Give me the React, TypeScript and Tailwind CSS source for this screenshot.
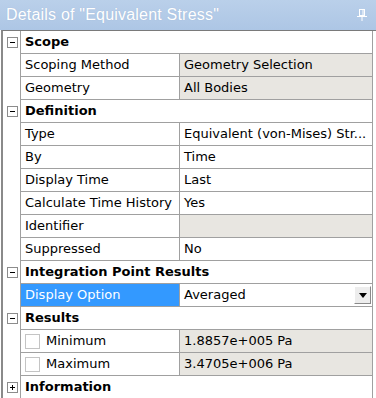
import React from "react";

type Row =
  | { kind: "header"; label: string; open: boolean }
  | { kind: "prop"; name: string; value: string; readOnly?: boolean; selected?: boolean; dropdown?: boolean; check?: boolean };

const rows: Row[] = [
  { kind: "header", label: "Scope", open: true },
  { kind: "prop", name: "Scoping Method", value: "Geometry Selection", readOnly: true },
  { kind: "prop", name: "Geometry", value: "All Bodies", readOnly: true },
  { kind: "header", label: "Definition", open: true },
  { kind: "prop", name: "Type", value: "Equivalent (von-Mises) Str..." },
  { kind: "prop", name: "By", value: "Time" },
  { kind: "prop", name: "Display Time", value: "Last" },
  { kind: "prop", name: "Calculate Time History", value: "Yes" },
  { kind: "prop", name: "Identifier", value: "", readOnly: true },
  { kind: "prop", name: "Suppressed", value: "No" },
  { kind: "header", label: "Integration Point Results", open: true },
  { kind: "prop", name: "Display Option", value: "Averaged", selected: true, dropdown: true },
  { kind: "header", label: "Results", open: true },
  { kind: "prop", name: "Minimum", value: "1.8857e+005 Pa", readOnly: true, check: true },
  { kind: "prop", name: "Maximum", value: "3.4705e+006 Pa", readOnly: true, check: true },
  { kind: "header", label: "Information", open: false },
];

function ToggleBox({ open }: { open: boolean }) {
  return (
    <div className="w-[11px] h-[11px] border border-[#8c8c8c] bg-white flex items-center justify-center relative">
      <div className="w-[5px] h-px bg-black" />
      {!open && <div className="absolute w-px h-[5px] bg-black" />}
    </div>
  );
}

function PinIcon() {
  return (
    <svg width="10" height="12" viewBox="0 0 10 12" fill="none">
      <rect x="2.5" y="0.5" width="5" height="6" stroke="white" />
      <line x1="6" y1="1" x2="6" y2="6" stroke="white" />
      <line x1="0" y1="7.5" x2="10" y2="7.5" stroke="white" />
      <line x1="5" y1="8" x2="5" y2="12" stroke="white" />
    </svg>
  );
}

export default function App() {
  return (
    <div className="w-[376px] h-[398px] overflow-hidden bg-white flex flex-col text-[13px] text-black font-['DejaVu_Sans',Verdana,sans-serif]">
      <div className="h-[30px] shrink-0 flex items-center justify-between pl-[6px] pr-[9px] bg-gradient-to-b from-[#bad0ea] to-[#adc6e5]">
        <span className="text-[16px] text-white tracking-[0.2px] font-['Liberation_Sans',Arial,sans-serif] [text-shadow:0_0_1px_#9bb3d3]">
          Details of "Equivalent Stress"
        </span>
        <PinIcon />
      </div>
      <div className="flex-1 flex border-t border-[#7a7a7a] border-l-[2px] border-l-[#8a8a8a] ml-px">
        <div className="flex-1 flex flex-col">
          {rows.map((r, i) =>
            r.kind === "header" ? (
              <div key={i} className="flex h-[23px] shrink-0">
                <div className="w-[17px] flex items-center justify-center pl-px">
                  <ToggleBox open={r.open} />
                </div>
                <div className="flex-1 flex items-center border-l border-b border-r border-[#a0a0a0] pl-[4px] font-bold whitespace-nowrap">
                  {r.label}
                </div>
              </div>
            ) : (
              <div key={i} className="flex h-[23px] shrink-0">
                <div className="w-[17px]" />
                <div
                  className={
                    "w-[159px] flex items-center border-l border-b border-[#a0a0a0] pl-[4px] gap-[6px] overflow-hidden " +
                    (r.selected ? "bg-[#3399ff] text-white" : "bg-white")
                  }
                >
                  {r.check && <div className="w-[15px] h-[15px] shrink-0 border border-[#c4c4c4] bg-white" />}
                  <span className="whitespace-nowrap">{r.name}</span>
                </div>
                <div
                  className={
                    "flex-1 flex items-center border-l border-b border-r border-[#a0a0a0] pl-[4px] relative overflow-hidden " +
                    (r.readOnly ? "bg-[#e8e6e1]" : "bg-white")
                  }
                >
                  <span className="whitespace-nowrap">{r.value}</span>
                  {r.dropdown && (
                    <div className="absolute right-[1px] top-[2px] w-[17px] h-[18px] bg-[#ededed] border border-t-white border-l-white border-r-[#8a8a8a] border-b-[#8a8a8a] flex items-center justify-center">
                      <svg width="8" height="5" viewBox="0 0 8 5">
                        <polygon points="0,0 8,0 4,5" fill="black" />
                      </svg>
                    </div>
                  )}
                </div>
              </div>
            )
          )}
        </div>
        <div className="w-[3px] bg-white" />
      </div>
    </div>
  );
}
